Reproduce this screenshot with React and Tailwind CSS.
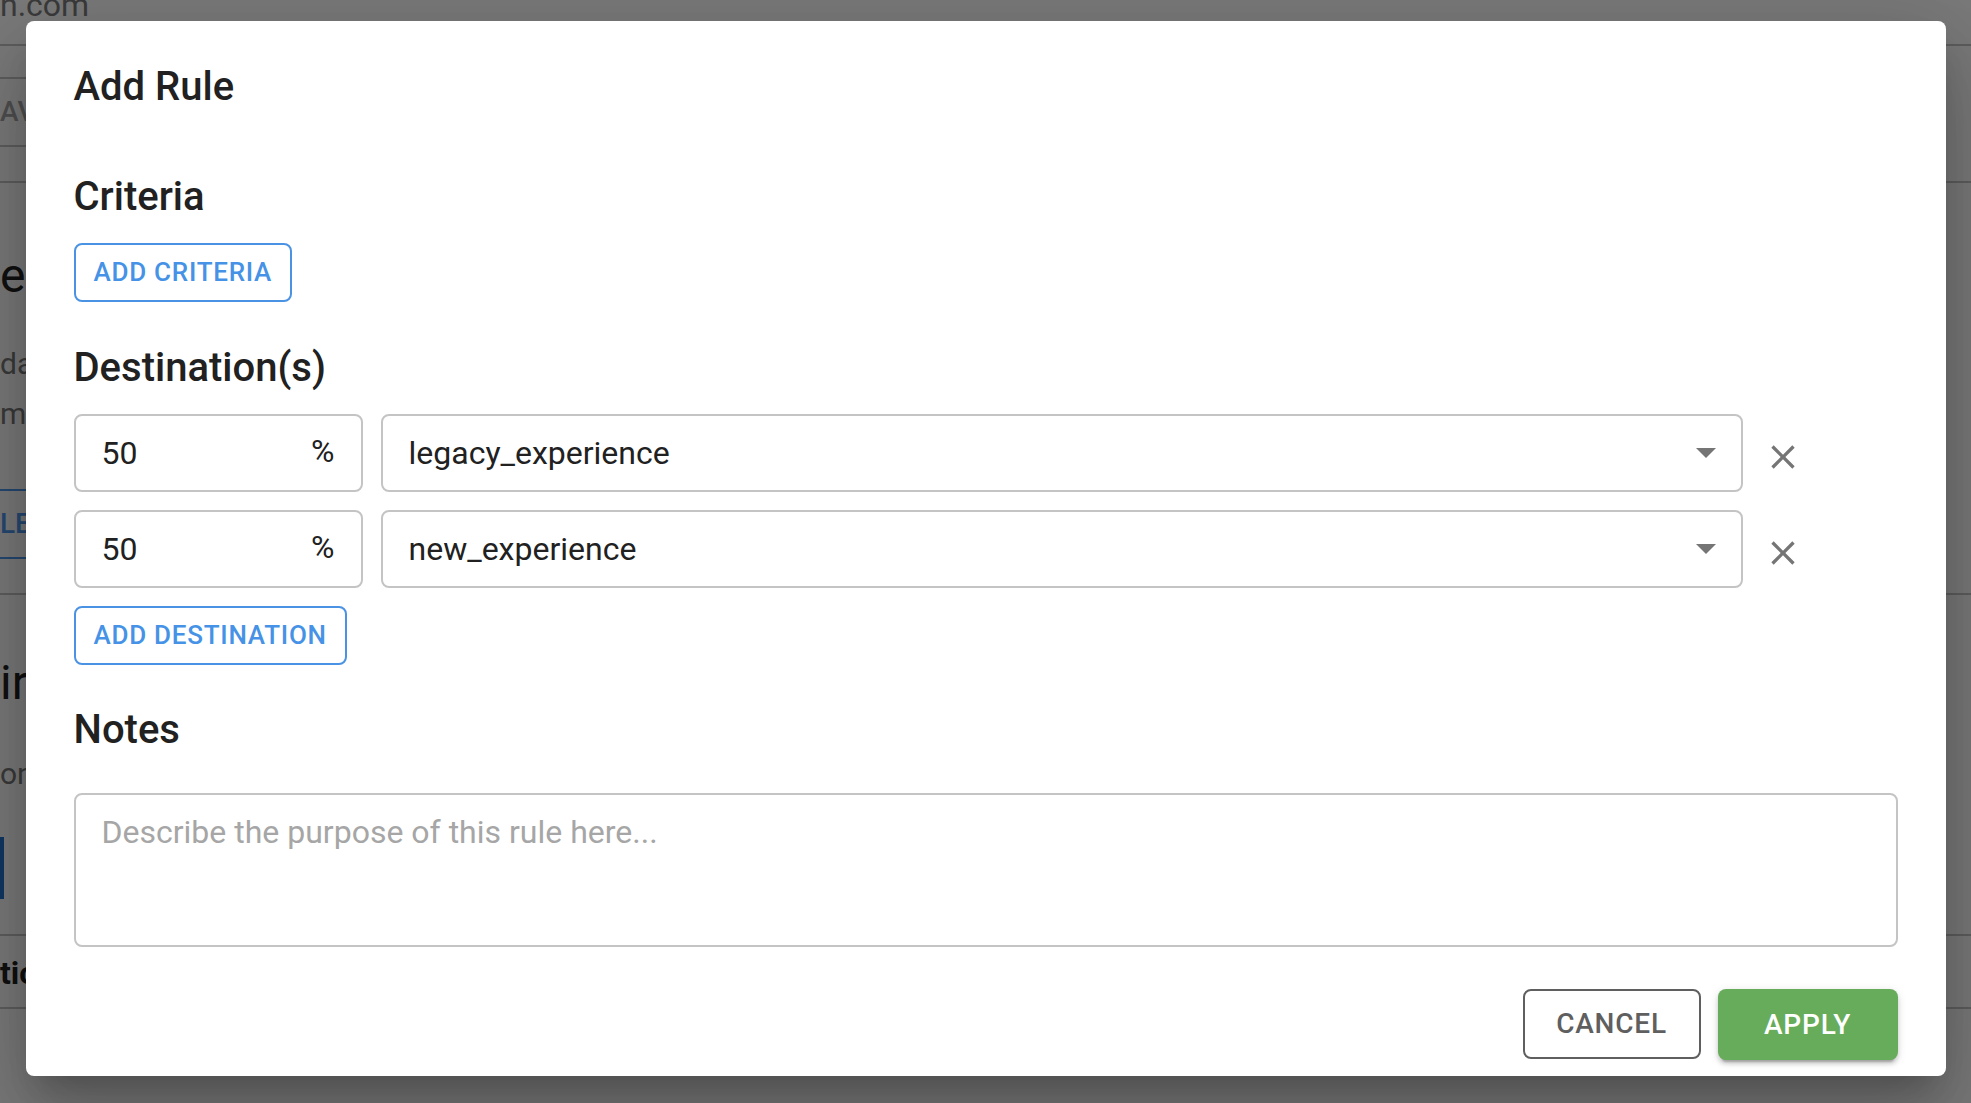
import React from 'react';

const destinations = [
  { pct: '50', name: 'legacy_experience' },
  { pct: '50', name: 'new_experience' },
];

const ArrowDropDown = () => (
  <svg width="20" height="10" viewBox="7 10 10 5" className="shrink-0">
    <path d="M7 10l5 5 5-5z" fill="#757575" />
  </svg>
);

const CloseIcon = () => (
  <svg width="40" height="40" viewBox="0 0 24 24">
    <path
      fill="#757575"
      d="M19 6.41 17.59 5 12 10.59 6.41 5 5 6.41 10.59 12 5 17.59 6.41 19 12 13.41 17.59 19 19 17.59 13.41 12z"
    />
  </svg>
);

const OutlineButton = ({ children, className = '' }) => (
  <button
    className={`self-start h-[59px] rounded-[8px] border-2 border-[#4a92e4] px-[18px] text-[26px] font-medium tracking-[0.74px] text-[#4592e6] ${className}`}
  >
    {children}
  </button>
);

const SectionTitle = ({ children, className = '' }) => (
  <h3 className={`text-[40px] leading-[48px] font-medium text-[#212121] ${className}`}>{children}</h3>
);

// page underneath the modal backdrop, only its edges show
const BackgroundPage = () => (
  <div className="flex flex-col">
    <div className="h-[46px] border-b-2 border-[#bdbdbd] overflow-hidden">
      <div className="-mt-[14px] text-[32px] leading-[38px] text-[#777]">n.com</div>
    </div>
    <div className="h-[137px] border-b-2 border-[#bdbdbd]">
      <div className="mt-[31px] flex h-[70px] w-[400px] items-center border-y-2 border-[#bdbdbd] text-[28px] font-medium text-[#9e9e9e]">
        AV
      </div>
    </div>
    <div className="pt-[65px] text-[48px] leading-[56px] text-[#212121]">e</div>
    <div className="mt-[42px] text-[30px] leading-[36px] text-[#757575]">da</div>
    <div className="mt-[14px] text-[30px] leading-[36px] text-[#757575]">m</div>
    <div className="mt-[57px] flex h-[70px] w-[300px] items-center border-y-2 border-r-2 border-[#4a90e2] text-[28px] font-medium text-[#4a90e2]">
      LE
    </div>
    <div className="h-[36px] border-b-2 border-[#bdbdbd]" />
    <div className="mt-[60px] text-[48px] leading-[56px] text-[#212121]">ir</div>
    <div className="mt-[45px] text-[30px] leading-[36px] text-[#757575]">on</div>
    <div className="mt-[45px] h-[62px] w-[4px] bg-[#1e6fc8]" />
    <div className="h-[37px] border-b-2 border-[#bdbdbd]" />
    <div className="mt-[18px] text-[32px] leading-[38px] font-bold text-[#212121]">tic</div>
    <div className="h-[17px] border-b-2 border-[#bdbdbd]" />
  </div>
);

const DestinationRow = ({ pct, name }) => (
  <div className="flex items-center">
    <div className="flex h-[78px] w-[289px] shrink-0 items-center justify-between rounded-[8px] border-2 border-[#c4c4c4] pl-[26px] pr-[26px] text-[32px] text-[#212121]">
      <span>{pct}</span>
      <span className="-mt-[5px]">%</span>
    </div>
    <div className="ml-[18px] flex h-[78px] w-[1362px] shrink-0 items-center rounded-[8px] border-2 border-[#c4c4c4] pl-[26px] pr-[25px] text-[32px] text-[#212121]">
      <span className="flex-1">{name}</span>
      <ArrowDropDown />
    </div>
    <button className="ml-[20px] mt-[8px]">
      <CloseIcon />
    </button>
  </div>
);

const AddRuleDialog = () => (
  <div className="flex h-fit w-[1920px] flex-col rounded-[8px] bg-white px-[48px] pt-[42px] pb-[16px] shadow-[0_22px_30px_-14px_rgba(0,0,0,0.2),0_48px_76px_6px_rgba(0,0,0,0.14),0_18px_92px_16px_rgba(0,0,0,0.12)]">
    <h2 className="text-[40px] leading-[48px] font-medium text-[#212121]">Add Rule</h2>

    <SectionTitle className="mt-[62px]">Criteria</SectionTitle>
    <OutlineButton className="mt-[22px]">ADD CRITERIA</OutlineButton>

    <SectionTitle className="mt-[42px]">Destination(s)</SectionTitle>
    <div className="mt-[22px] flex flex-col gap-[18px]">
      {destinations.map((d) => (
        <DestinationRow key={d.name} {...d} />
      ))}
    </div>
    <OutlineButton className="mt-[18px]">ADD DESTINATION</OutlineButton>

    <SectionTitle className="mt-[41px]">Notes</SectionTitle>
    <textarea
      className="mt-[39px] h-[154px] w-full resize-none rounded-[8px] border-2 border-[#c4c4c4] px-[26px] pt-[18px] text-[32px] leading-[38px] text-[#212121] outline-none placeholder:text-[#a6a6a6]"
      placeholder="Describe the purpose of this rule here..."
    />

    <div className="mt-[42px] flex justify-end gap-[17px]">
      <button className="h-[70px] w-[178px] rounded-[8px] border-2 border-[#5f5f5f] text-[28px] font-medium tracking-[0.8px] text-[#5f5f5f]">
        CANCEL
      </button>
      <button className="h-[71px] w-[180px] rounded-[8px] bg-[#67ac5b] text-[28px] font-medium tracking-[0.8px] text-white shadow-[0_6px_2px_-4px_rgba(0,0,0,0.2),0_4px_4px_0_rgba(0,0,0,0.14),0_2px_10px_0_rgba(0,0,0,0.12)]">
        APPLY
      </button>
    </div>
  </div>
);

export default function App() {
  return (
    <div className="relative h-[1103px] w-full overflow-hidden bg-[#f5f5f5] font-['Roboto',sans-serif]">
      <BackgroundPage />
      <div className="absolute inset-0 flex justify-center bg-black/50 pt-[21px]">
        <AddRuleDialog />
      </div>
    </div>
  );
}
